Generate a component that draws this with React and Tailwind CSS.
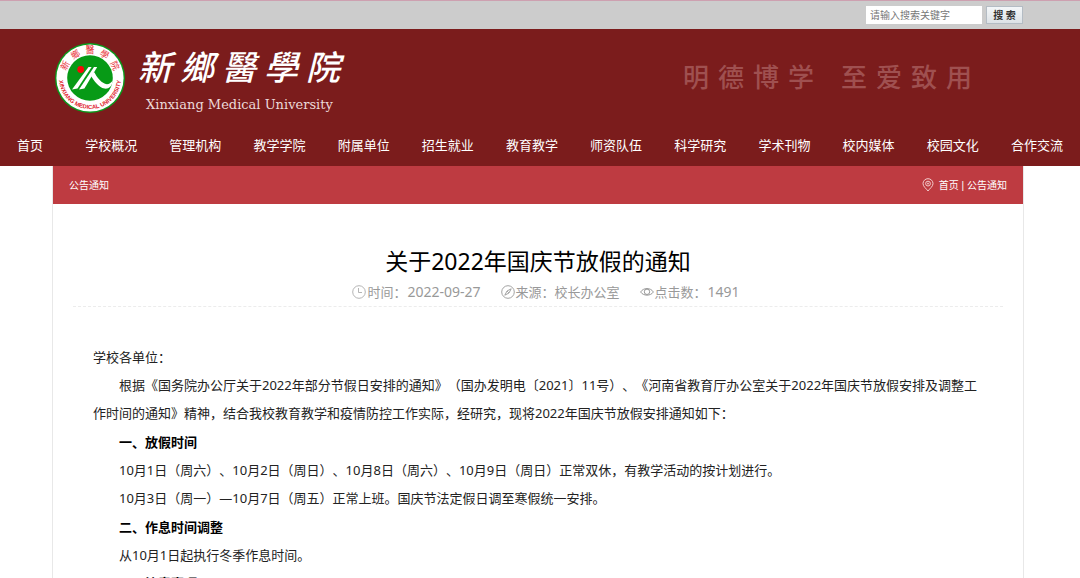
const navItems = [
  "学校概况",
  "管理机构",
  "教学学院",
  "附属单位",
  "招生就业",
  "教育教学",
  "师资队伍",
  "科学研究",
  "学术刊物",
  "校内媒体",
  "校园文化",
  "合作交流",
];

function Emblem() {
  return (
    <svg viewBox="0 0 72 72" className="size-[72px] shrink-0" aria-hidden="true">
      <defs>
        <path id="ring-top" d="M 12.4 43 A 24.6 24.6 0 1 1 59.6 43" />
        <path id="ring-bottom" d="M 5 36 A 31 31 0 0 0 67 36" />
      </defs>
      <circle cx="36" cy="36" r="35" fill="#0a9a1c" />
      <circle cx="36" cy="36" r="33.6" fill="#fff" />
      <circle cx="36" cy="36" r="22.8" fill="#079a16" />
      <circle cx="26.7" cy="27.5" r="3.4" fill="#f80808" />
      <path d="M34.5 25 L37.6 25 L23.5 46.5 L18 47.5 Z" fill="#fff" />
      <path d="M40 25 L43.2 25 L30.4 46.5 L25 47.5 Z" fill="#fff" />
      <path
        d="M37.5 30.5 L40.5 30.5 C42.5 34.5 46 39.5 51 41.8 C54 42.8 56.5 41.5 58.8 38.5 C58.2 44.5 54.5 47.2 50.5 46.6 C44.5 45.4 40 38.5 37 34 Z"
        fill="#fff"
      />
      <text fill="#e8323a" fontSize="9" fontFamily="Noto Sans CJK TC, sans-serif">
        <textPath href="#ring-top" startOffset="50%" textAnchor="middle">
          {"新\u2002鄉\u2002醫\u2002學\u2002院"}
        </textPath>
      </text>
      <text fill="#e0202c" fontSize="5.8" fontWeight="700" fontFamily="Liberation Sans, sans-serif">
        <textPath href="#ring-bottom" startOffset="50%" textAnchor="middle">
          XINXIANG MEDICAL UNIVERSITY
        </textPath>
      </text>
    </svg>
  );
}

function PinIcon() {
  return (
    <svg viewBox="0 0 12 14" className="h-[14px] w-[12px]" fill="none" stroke="#f3cccc">
      <path d="M6 13 C4.4 10.6 1 8.6 1 5.6 A5 4.9 0 0 1 11 5.6 C11 8.6 7.6 10.6 6 13 Z" />
      <circle cx="6" cy="5.6" r="2.4" />
      <circle cx="6" cy="5.6" r="0.6" />
    </svg>
  );
}

function ClockIcon() {
  return (
    <svg viewBox="0 0 14 14" className="size-[14px]" fill="none" stroke="#adadad">
      <circle cx="7" cy="7" r="6.3" strokeWidth="0.9" />
      <path d="M6.5 3 V7.5 H10" strokeWidth="0.9" />
    </svg>
  );
}

function CompassIcon() {
  return (
    <svg viewBox="0 0 14 14" className="size-[14px]" fill="none" stroke="#999">
      <circle cx="7" cy="7" r="6.3" strokeWidth="0.9" />
      <path d="M10.2 3.8 L8 8 L3.8 10.2 L6 6 Z" strokeWidth="0.9" />
      <path d="M6 6 L8 8" strokeWidth="0.8" />
    </svg>
  );
}

function EyeIcon() {
  return (
    <svg viewBox="0 0 14 14" className="size-[14px]" fill="none" stroke="#999">
      <path d="M0.6 7 C3.4 2.4 10.6 2.4 13.4 7 C10.6 11.2 3.4 11.2 0.6 7 Z" />
      <circle cx="7" cy="6.8" r="2.7" />
    </svg>
  );
}

function Spaced({ text, className }) {
  return (
    <span className={className}>
      {[...text].map((char, i) => (
        <span key={i}>{char}</span>
      ))}
    </span>
  );
}

function TopBar() {
  return (
    <div className="h-[29px] border-t border-[#cda0b0] bg-[#ccc] pr-[57px]">
      <form className="flex h-full items-center justify-end gap-1" onSubmit={(e) => e.preventDefault()}>
        <input
          type="text"
          aria-label="请输入搜索关键字"
          placeholder="请输入搜索关键字"
          className="h-[18px] w-[116px] bg-white px-1 text-[10px] placeholder:text-[#777]"
        />
        <button
          type="submit"
          className="h-[18px] w-[37px] border border-[#b4bcc4] bg-linear-to-b from-[#f4f7f9] to-[#dde2e6] text-[10px] leading-4 font-bold text-[#333]"
        >
          搜 索
        </button>
      </form>
    </div>
  );
}

function Header() {
  return (
    <header className="bg-[#7b1c1c] text-white">
      <div className="flex h-[97px] items-center justify-between pr-[108px] pl-[54px]">
        <a href="#" className="flex items-center gap-3">
          <Emblem />
          <span className="flex flex-col gap-1">
            <Spaced
              text="新鄉醫學院"
              className="flex gap-2 font-['Noto_Sans_CJK_TC',sans-serif] text-[34px] leading-[50px] font-medium italic"
            />
            <span className="pl-2 font-['DejaVu_Serif',serif] text-[13px] leading-5 text-[#ecd9d9]">
              Xinxiang Medical University
            </span>
          </span>
        </a>
        <p className="flex gap-[27px] pb-0.5 text-[26px] leading-10 font-medium text-[#9f5050]">
          <Spaced text="明德博学" className="flex gap-[9px]" />
          <Spaced text="至爱致用" className="flex gap-[9px]" />
        </p>
      </div>
      <nav className="flex h-10 items-center justify-between px-[17px] text-[13px]">
        <a href="#" className="pr-[10px] whitespace-nowrap">
          首页
        </a>
        {navItems.map((item) => (
          <a key={item} href="#" className="whitespace-nowrap">
            {item}
          </a>
        ))}
      </nav>
    </header>
  );
}

export default function App() {
  return (
    <div className="min-h-screen bg-white font-['Noto_Sans','Noto_Sans_CJK_SC',sans-serif] text-[#222] [text-spacing-trim:space-all]">
      <TopBar />
      <Header />
      <main className="mr-[56px] ml-[52px] border-x border-[#e8e8e8]">
        {/* Breadcrumb */}
        <div className="flex h-[38px] items-center justify-between bg-[#be3b41] px-4 font-['Liberation_Sans','Noto_Sans_CJK_SC',sans-serif] text-[10px] text-white">
          <h2>公告通知</h2>
          <div className="flex items-center gap-[5px]">
            <PinIcon />
            <span>
              <a href="#">首页</a> | <a href="#">公告通知</a>
            </span>
          </div>
        </div>

        <article className="px-5 pt-[39px]">
          <h1 className="text-center text-[23px] leading-9 text-black">关于2022年国庆节放假的通知</h1>
          <div className="flex h-7 justify-center gap-5 border-b border-dashed border-[#ececec] pl-4 text-[13px] leading-[26px] text-[#999]">
            <span className="flex h-[26px] items-center gap-px">
              <ClockIcon />
              <span>时间：</span>
              <time className="text-[14px]">2022-09-27</time>
            </span>
            <span className="flex h-[26px] items-center gap-px">
              <CompassIcon />
              <span>来源：校长办公室</span>
            </span>
            <span className="flex h-[26px] items-center gap-px">
              <EyeIcon />
              <span>点击数：</span>
              <span className="text-[14px]">1491</span>
            </span>
          </div>

          {/* Notice text */}
          <div className="px-5 pt-9 text-[13px] leading-7">
            <p>学校各单位：</p>
            <p className="indent-[2em]">
              根据《国务院办公厅关于2022年部分节假日安排的通知》（国办发明电〔2021〕11号）、《河南省教育厅办公室关于2022年国庆节放假安排及调整工作时间的通知》精神，结合我校教育教学和疫情防控工作实际，经研究，现将2022年国庆节放假安排通知如下：
            </p>
            <p className="pt-px indent-[2em] font-bold text-black">一、放假时间</p>
            <p className="indent-[2em]">
              10月1日（周六）、10月2日（周日）、10月8日（周六）、10月9日（周日）正常双休，有教学活动的按计划进行。
            </p>
            <p className="indent-[2em]">10月3日（周一）—10月7日（周五）正常上班。国庆节法定假日调至寒假统一安排。</p>
            <p className="pt-px indent-[2em] font-bold text-black">二、作息时间调整</p>
            <p className="indent-[2em]">从10月1日起执行冬季作息时间。</p>
            <p className="indent-[2em] font-bold text-black">三、注意事项</p>
          </div>
        </article>
      </main>
    </div>
  );
}
